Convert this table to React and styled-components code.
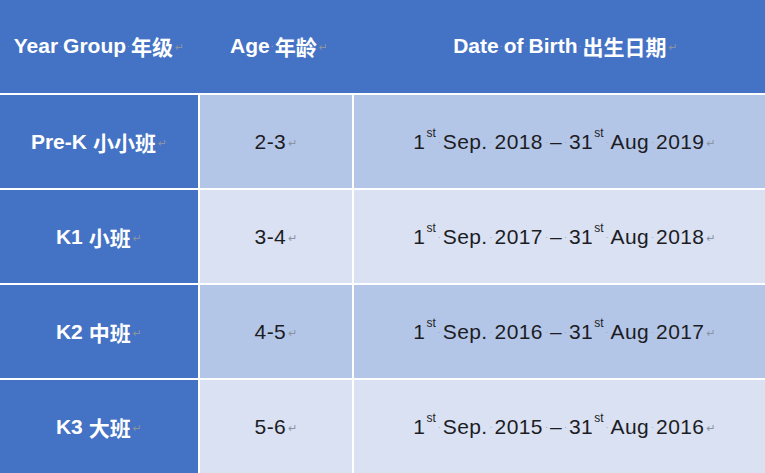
import React from 'react';
import styled, { createGlobalStyle } from 'styled-components';

const GlobalStyle = createGlobalStyle`
  html, body {
    margin: 0;
    padding: 0;
    background: #ffffff;
  }
`;

const Table = styled.div`
  width: 765px;
  height: 473px;
  display: grid;
  grid-template-columns: 198px 152px 1fr;
  grid-template-rows: 93px repeat(4, 93px);
  row-gap: 2px;
  column-gap: 2px;
  background: #ffffff;
  overflow: hidden;
`;

const HeaderRow = styled.div`
  grid-column: 1 / span 3;
  display: grid;
  grid-template-columns: 198px 152px 1fr;
  column-gap: 2px;
  background: #4472c4;
`;

const HeadCell = styled.div`
  display: flex;
  align-items: center;
  justify-content: center;
  padding-left: ${props => props.shift || 0}px;
  color: #ffffff;
  font-family: 'Liberation Sans', 'Noto Sans CJK SC', sans-serif;
  font-weight: 700;
  font-size: 21px;
  padding-bottom: 2px;
  white-space: nowrap;
`;

const Cell = styled.div`
  display: flex;
  align-items: center;
  justify-content: center;
  padding-left: ${props => props.shift || 0}px;
  background: ${props => props.bg};
  color: ${props => (props.light ? '#ffffff' : '#1c1c24')};
  font-family: 'Liberation Sans', 'Noto Sans CJK SC', sans-serif;
  font-weight: ${props => (props.light ? 700 : 400)};
  font-size: 21px;
  letter-spacing: ${props => (props.light ? '0' : '0.4px')};
  white-space: nowrap;
`;

const Dot = styled.span`
  padding: 0 ${props => (props.wide ? '2px' : '1px')};
  color: #9aa6b8;
  font-size: 9px;
  font-weight: 400;
  letter-spacing: 0;
`;

const Gap = styled.span`
  display: inline-block;
  width: 6px;
`;

const Ret = styled.span`
  color: #8a93a3;
  font-size: 11px;
  margin-left: 2px;
  font-family: 'DejaVu Sans', sans-serif;
  font-weight: 400;
  letter-spacing: 0;
  position: relative;
  top: 2px;
`;

const Sup = styled.span`
  font-size: 12px;
  position: relative;
  top: -9px;
  letter-spacing: 0;
  margin-left: 1px;
`;

const S = ({ wide }) => <Dot wide={wide}>·</Dot>;
const R = () => <Ret>↵</Ret>;

const rows = [
  { code: 'Pre-K', name: '小小班', age: '2-3', from: '2018', to: '2019', bg: '#b4c6e7' },
  { code: 'K1', name: '小班', age: '3-4', from: '2017', to: '2018', bg: '#d9e1f2' },
  { code: 'K2', name: '中班', age: '4-5', from: '2016', to: '2017', bg: '#b4c6e7' },
  { code: 'K3', name: '大班', age: '5-6', from: '2015', to: '2016', bg: '#d9e1f2' }
];

const App = () => (
  <>
    <GlobalStyle />
    <Table>
      <HeaderRow>
        <HeadCell>
          Year<S />Group<S />年级<R />
        </HeadCell>
        <HeadCell shift={6}>
          Age<S />年龄<R />
        </HeadCell>
        <HeadCell shift={12}>
          Date<S />of<S />Birth<S />出生日期<R />
        </HeadCell>
      </HeaderRow>
      {rows.map(r => (
        <React.Fragment key={r.code}>
          <Cell bg="#4472c4" light>
            {r.code}
            <Gap />
            {r.name}
            <R />
          </Cell>
          <Cell bg={r.bg}>
            {r.age}
            <R />
          </Cell>
          <Cell bg={r.bg} shift={10}>
            1<Sup>st</Sup>
            <S wide />Sep.<S wide />{r.from}<S wide />–<S wide />31<Sup>st</Sup>
            <S wide />Aug<S wide />{r.to}
            <R />
          </Cell>
        </React.Fragment>
      ))}
    </Table>
  </>
);

export default App;
